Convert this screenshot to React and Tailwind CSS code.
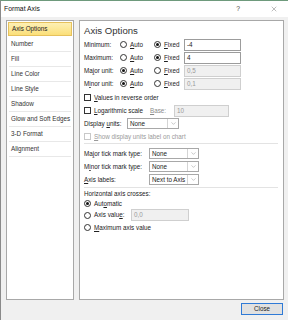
import { ChevronDown, X } from 'lucide-react';

const font = { fontFamily: '"Liberation Sans", Arial, sans-serif' };

const sideItems = ['Axis Options', 'Number', 'Fill', 'Line Color', 'Line Style', 'Shadow', 'Glow and Soft Edges', '3-D Format', 'Alignment'];

const Radio = ({ on }) => (
  <span className="w-[7px] h-[7px] rounded-full border border-[#333] bg-white flex items-center justify-center shrink-0">
    {on && <span className="w-[3px] h-[3px] rounded-full bg-[#111]" />}
  </span>
);

const Check = ({ disabled }) => (
  <span className={`w-[7px] h-[7px] border bg-white shrink-0 ${disabled ? 'border-[#c8c8c8]' : 'border-[#333]'}`} />
);

const U = ({ children }) => <span className="underline underline-offset-1">{children}</span>;

const Box = ({ value, disabled, w = 'w-[57px]' }) => (
  <div className={`${w} h-[12px] border flex items-center px-[2px] ${disabled ? 'bg-[#f0f0f0] border-[#cfcfcf] text-[#9a9a9a]' : 'bg-white border-[#9c9c9c] text-[#222]'}`}>
    {value}
  </div>
);

const Select = ({ value, w = 'w-[50px]' }) => (
  <div className={`${w} h-[11px] border border-[#a8a8a8] bg-white flex items-stretch`}>
    <span className="flex-1 flex items-center px-[2px] text-[#222] whitespace-nowrap overflow-hidden">{value}</span>
    <span className="w-[11px] border-l border-[#d4d4d4] flex items-center justify-center">
      <ChevronDown size={7} strokeWidth={1.2} color="#666" />
    </span>
  </div>
);

const UnitRow = ({ label, autoOn, value }) => (
  <div className="h-[13px] flex items-center">
    <span className="w-[36px]">{label}</span>
    <Radio on={autoOn} />
    <span className="ml-[3px] w-[24px]"><U>A</U>uto</span>
    <Radio on={!autoOn} />
    <span className="ml-[3px] w-[20px]"><U>F</U>ixed</span>
    <Box value={value} disabled={autoOn} />
  </div>
);

export default function App() {
  return (
    <div style={font} className="w-[288px] h-[320px] bg-[#f0f0f0] border-t border-[#6e9a7c] border-l border-l-[#8a8a8a] flex flex-col text-[6.3px] text-[#222] overflow-hidden">
      <div className="h-[16px] bg-white flex items-center pl-[3px] pr-[10px] text-[6.8px] text-[#111]">
        <span className="flex-1">Format Axis</span>
        <span className="mr-[30px] text-[#444]">?</span>
        <X size={8} strokeWidth={1} color="#333" />
      </div>

      <div className="flex gap-[5px] pl-[5px] pt-[3px] h-[283px]">
        <div className="w-[68px] bg-white border border-[#a8a8a8] p-[1px]">
          {sideItems.map((item, i) =>
            i === 0 ? (
              <div key={item} className="h-[14px] mb-[1px] flex items-center pl-[3px] bg-gradient-to-b from-[#fdf0b4] to-[#fbdf78] border border-[#e6c15c]">
                {item}
              </div>
            ) : (
              <div key={item} className="h-[15px] mx-[1px] flex items-center pl-[2px] border-b border-[#e8e8e8] text-[#333]">
                {item}
              </div>
            )
          )}
        </div>

        <div className="w-[205px] bg-white border border-[#a8a8a8] pl-[4px] pr-[5px]">
          <div className="h-[17px] pt-[3px] flex items-center text-[9.6px] text-[#333]">Axis Options</div>
          <UnitRow label="Minimum:" autoOn={false} value="-4" />
          <UnitRow label={<>Maximum:</>} autoOn={false} value="4" />
          <UnitRow label={<>Ma<U>j</U>or unit:</>} autoOn={true} value="0,5" />
          <UnitRow label={<>M<U>i</U>nor unit:</>} autoOn={true} value="0,1" />

          <div className="h-[13px] mt-[1px] flex items-center gap-[3px]">
            <Check />
            <span><U>V</U>alues in reverse order</span>
          </div>
          <div className="h-[13px] flex items-center">
            <Check />
            <span className="ml-[3px] w-[56px]"><U>L</U>ogarithmic scale</span>
            <span className="w-[24px] text-[#8a8a8a]"><U>B</U>ase:</span>
            <Box value="10" disabled w="w-[55px]" />
          </div>
          <div className="h-[13px] flex items-center">
            <span className="w-[43px]">Display <U>u</U>nits:</span>
            <Select value="None" w="w-[52px]" />
          </div>
          <div className="h-[13px] flex items-center gap-[3px] text-[#9a9a9a]">
            <Check disabled />
            <span><U>S</U>how display units label on chart</span>
          </div>

          <div className="border-t border-[#e3e3e3] mt-[0px] mb-[3px]" />

          <div className="h-[13px] flex items-center">
            <span className="w-[65px]">Ma<U>j</U>or tick mark type:</span>
            <Select value="None" />
          </div>
          <div className="h-[13px] flex items-center">
            <span className="w-[65px]">M<U>i</U>nor tick mark type:</span>
            <Select value="None" />
          </div>
          <div className="h-[13px] flex items-center">
            <span className="w-[65px]"><U>A</U>xis labels:</span>
            <Select value="Next to Axis" />
          </div>

          <div className="border-t border-[#e3e3e3] mt-[1px]" />

          <div className="h-[10px] mt-[1px] flex items-center">Horizontal axis crosses:</div>
          <div className="h-[9px] flex items-center gap-[3px]">
            <Radio on />
            <span>Aut<U>o</U>matic</span>
          </div>
          <div className="h-[14px] flex items-center">
            <Radio />
            <span className="ml-[3px] w-[37px]">Axis valu<U>e</U>:</span>
            <Box value="0,0" disabled w="w-[58px]" />
          </div>
          <div className="h-[11px] flex items-center gap-[3px]">
            <Radio />
            <span><U>M</U>aximum axis value</span>
          </div>
        </div>
      </div>

      <div className="flex justify-end pr-[5px] pt-[3px]">
        <button className="w-[42px] h-[12px] bg-[#e1e1e1] border border-[#2f7ad6] text-[6.3px] text-[#222] flex items-center justify-center">
          Close
        </button>
      </div>
    </div>
  );
}
